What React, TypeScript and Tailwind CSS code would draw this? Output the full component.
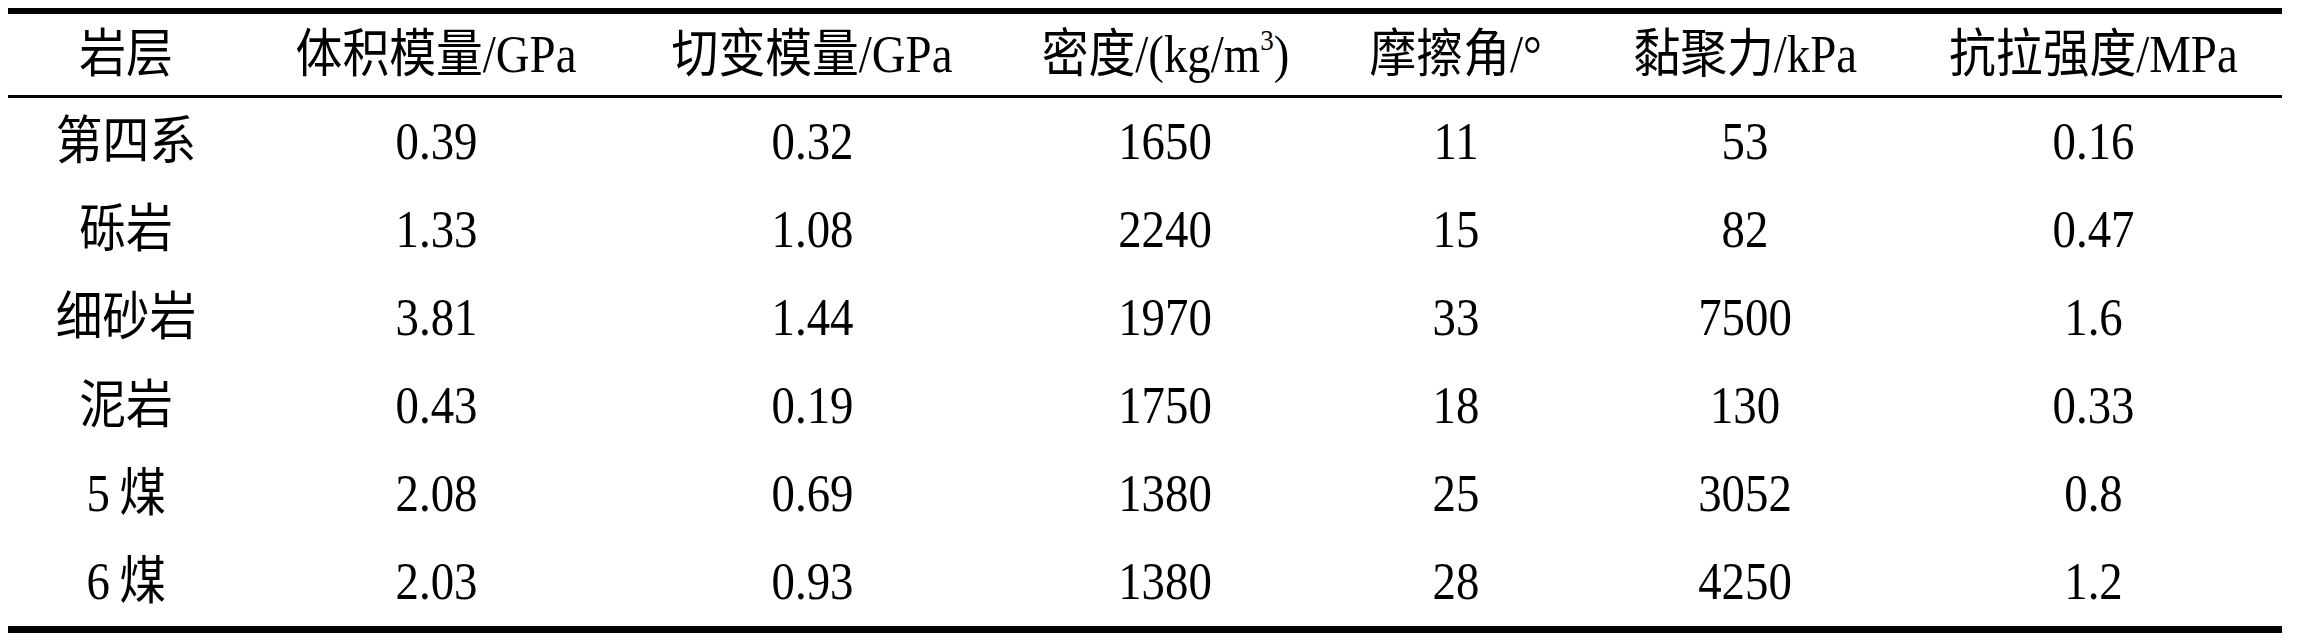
const headers: React.ReactNode[] = [
	"岩层",
	"体积模量/GPa",
	"切变模量/GPa",
	<>
		密度/(kg/m<sup className="text-[30px] align-baseline relative -top-[22px]">3</sup>)
	</>,
	"摩擦角/°",
	"黏聚力/kPa",
	"抗拉强度/MPa",
]

const rows: string[][] = [
	["第四系", "0.39", "0.32", "1650", "11", "53", "0.16"],
	["砾岩", "1.33", "1.08", "2240", "15", "82", "0.47"],
	["细砂岩", "3.81", "1.44", "1970", "33", "7500", "1.6"],
	["泥岩", "0.43", "0.19", "1750", "18", "130", "0.33"],
	["5\u2009煤", "2.08", "0.69", "1380", "25", "3052", "0.8"],
	["6\u2009煤", "2.03", "0.93", "1380", "28", "4250", "1.2"],
]

const gridCols = "grid grid-cols-[236px_384px_368px_338px_244px_334px_370px]"

const Cell = ({ children, last }: { children: React.ReactNode; last: boolean }) => (
	<div className={`flex items-center justify-center whitespace-nowrap ${last ? "pr-[8px]" : ""}`}>
		<span className="inline-block scale-x-[0.9]">{children}</span>
	</div>
)

const App = () => {
	return (
		<div className="w-[2299px] h-[644px] bg-white pt-[8px] pl-[8px] text-black font-[family-name:'Liberation_Serif','Noto_Sans_CJK_SC',serif] text-[52px] leading-none">
			<div className="w-[2274px] border-t-[6px] border-b-[7px] border-black">
				<div className={`${gridCols} h-[84px] border-b-[3px] border-black`}>
					{headers.map((h, i) => (
						<Cell key={i} last={i === 6}>
							{h}
						</Cell>
					))}
				</div>
				{rows.map((r, ri) => (
					<div key={ri} className={`${gridCols} h-[88px]`}>
						{r.map((c, ci) => (
							<Cell key={ci} last={ci === 6}>
								{c}
							</Cell>
						))}
					</div>
				))}
			</div>
		</div>
	)
}

export default App
